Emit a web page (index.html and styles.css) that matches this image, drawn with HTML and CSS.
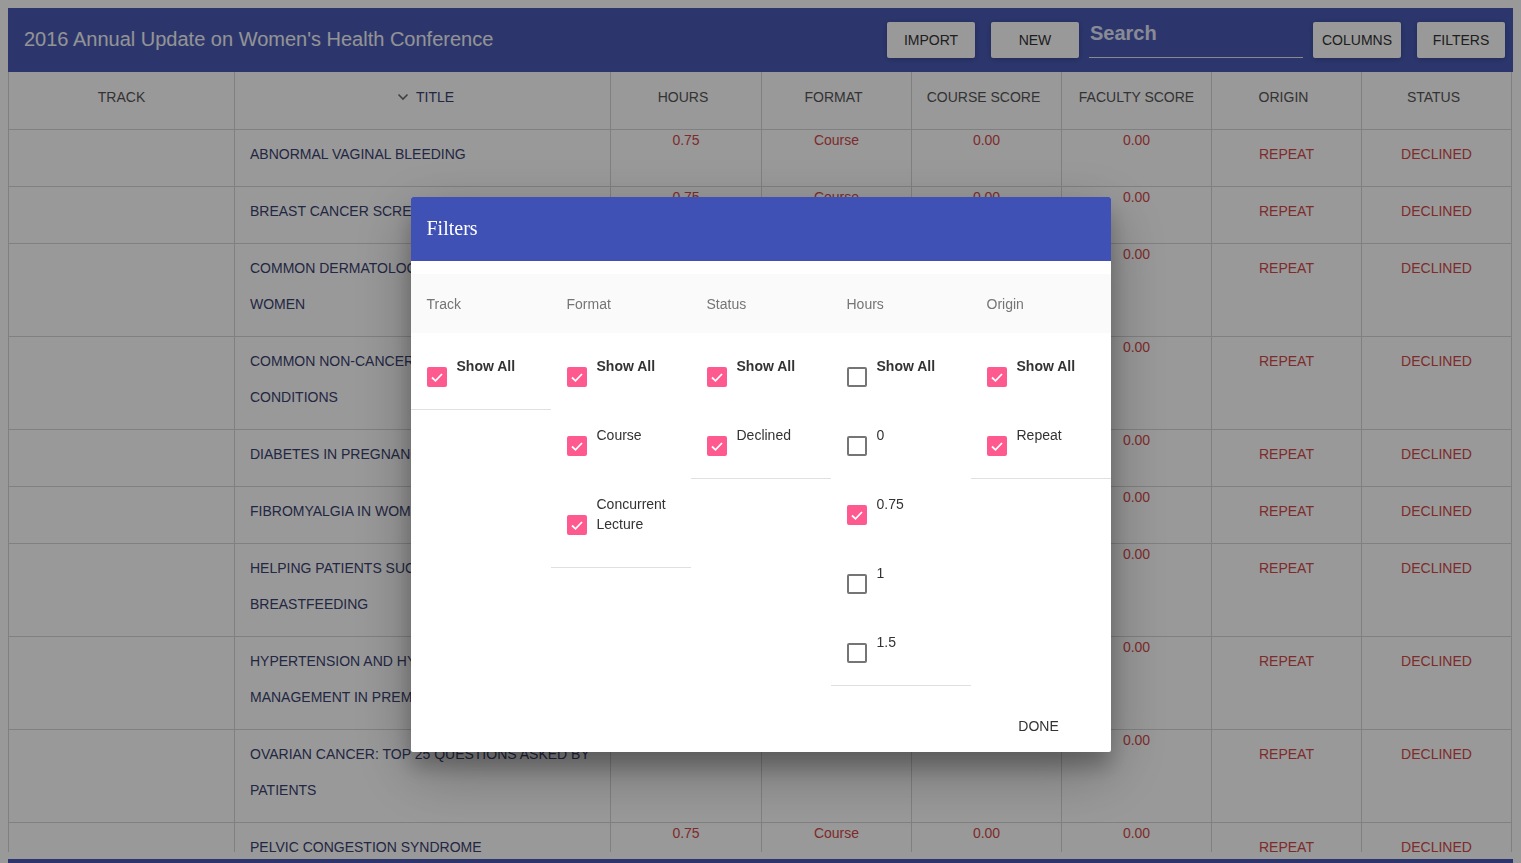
FILE: index.html
```html
<!DOCTYPE html>
<html lang="en">
<head>
<meta charset="utf-8">
<title>2016 Annual Update on Women's Health Conference</title>
<link rel="stylesheet" href="styles.css">
</head>
<body>
<div class="app">
  <header class="appbar">
    <h1 class="appbar-title">2016 Annual Update on Women's Health Conference</h1>
    <div class="appbar-actions">
      <button class="btn btn-import">Import</button>
      <button class="btn btn-new">New</button>
      <div class="search"><span class="search-hint">Search</span></div>
      <button class="btn btn-columns">Columns</button>
      <button class="btn">Filters</button>
    </div>
  </header>

  <div class="table-wrap">
    <table class="grid">
      <colgroup>
        <col class="c-track"><col class="c-title"><col class="c-hours"><col class="c-std"><col class="c-std"><col class="c-std"><col class="c-std"><col class="c-std">
      </colgroup>
      <thead>
        <tr>
          <th class="th-even">TRACK</th>
          <th class="th-sorted"><svg class="chev" viewBox="0 0 12 8" width="12" height="8"><path d="M1.5 1.5 L6 6 L10.5 1.5" fill="none" stroke="#6b6b6b" stroke-width="1.6"/></svg>TITLE</th>
          <th>HOURS</th>
          <th>FORMAT</th>
          <th>COURSE SCORE</th>
          <th class="th-even">FACULTY SCORE</th>
          <th>ORIGIN</th>
          <th>STATUS</th>
        </tr>
      </thead>
      <tbody>
        <tr><td></td><td class="t">ABNORMAL VAGINAL BLEEDING</td><td class="n">0.75</td><td class="n">Course</td><td class="n">0.00</td><td class="n">0.00</td><td class="s">REPEAT</td><td class="s">DECLINED</td></tr>
        <tr><td></td><td class="t">BREAST CANCER SCREENING</td><td class="n">0.75</td><td class="n">Course</td><td class="n">0.00</td><td class="n">0.00</td><td class="s">REPEAT</td><td class="s">DECLINED</td></tr>
        <tr><td></td><td class="t">COMMON DERMATOLOGICAL CONDITIONS IN WOMEN</td><td class="n">0.75</td><td class="n">Course</td><td class="n">0.00</td><td class="n">0.00</td><td class="s">REPEAT</td><td class="s">DECLINED</td></tr>
        <tr><td></td><td class="t">COMMON NON-CANCEROUS GYNECOLOGIC CONDITIONS</td><td class="n">0.75</td><td class="n">Course</td><td class="n">0.00</td><td class="n">0.00</td><td class="s">REPEAT</td><td class="s">DECLINED</td></tr>
        <tr><td></td><td class="t">DIABETES IN PREGNANCY</td><td class="n">0.75</td><td class="n">Course</td><td class="n">0.00</td><td class="n">0.00</td><td class="s">REPEAT</td><td class="s">DECLINED</td></tr>
        <tr><td></td><td class="t">FIBROMYALGIA IN WOMEN</td><td class="n">0.75</td><td class="n">Course</td><td class="n">0.00</td><td class="n">0.00</td><td class="s">REPEAT</td><td class="s">DECLINED</td></tr>
        <tr><td></td><td class="t">HELPING PATIENTS SUCCEED WITH BREASTFEEDING</td><td class="n">0.75</td><td class="n">Course</td><td class="n">0.00</td><td class="n">0.00</td><td class="s">REPEAT</td><td class="s">DECLINED</td></tr>
        <tr><td></td><td class="t">HYPERTENSION AND HYPERLIPIDEMIA MANAGEMENT IN PREMENOPAUSAL WOMEN</td><td class="n">0.75</td><td class="n">Course</td><td class="n">0.00</td><td class="n">0.00</td><td class="s">REPEAT</td><td class="s">DECLINED</td></tr>
        <tr><td></td><td class="t">OVARIAN CANCER: TOP 25 QUESTIONS ASKED BY PATIENTS</td><td class="n">0.75</td><td class="n">Course</td><td class="n">0.00</td><td class="n">0.00</td><td class="s">REPEAT</td><td class="s">DECLINED</td></tr>
        <tr><td></td><td class="t">PELVIC CONGESTION SYNDROME</td><td class="n">0.75</td><td class="n">Course</td><td class="n">0.00</td><td class="n">0.00</td><td class="s">REPEAT</td><td class="s">DECLINED</td></tr>
      </tbody>
    </table>
  </div>
  <div class="footer-bar"></div>
</div>

<div class="overlay"></div>

<div class="dialog" role="dialog">
  <div class="dialog-title">Filters</div>
  <div class="dialog-body">
    <div class="filter-head">
      <div class="fh">Track</div>
      <div class="fh">Format</div>
      <div class="fh">Status</div>
      <div class="fh">Hours</div>
      <div class="fh">Origin</div>
    </div>
    <div class="filter-cols">
      <div class="fcol">
        <div class="opt"><span class="box on"><svg viewBox="0 0 20 20"><path d="M5 10.5 L8.5 13.8 L15 7"/></svg></span><span class="opt-label bold">Show All</span></div>
      </div>
      <div class="fcol">
        <div class="opt"><span class="box on"><svg viewBox="0 0 20 20"><path d="M5 10.5 L8.5 13.8 L15 7"/></svg></span><span class="opt-label bold">Show All</span></div>
        <div class="opt"><span class="box on"><svg viewBox="0 0 20 20"><path d="M5 10.5 L8.5 13.8 L15 7"/></svg></span><span class="opt-label">Course</span></div>
        <div class="opt"><span class="box on"><svg viewBox="0 0 20 20"><path d="M5 10.5 L8.5 13.8 L15 7"/></svg></span><span class="opt-label">Concurrent Lecture</span></div>
      </div>
      <div class="fcol">
        <div class="opt"><span class="box on"><svg viewBox="0 0 20 20"><path d="M5 10.5 L8.5 13.8 L15 7"/></svg></span><span class="opt-label bold">Show All</span></div>
        <div class="opt"><span class="box on"><svg viewBox="0 0 20 20"><path d="M5 10.5 L8.5 13.8 L15 7"/></svg></span><span class="opt-label">Declined</span></div>
      </div>
      <div class="fcol">
        <div class="opt"><span class="box"></span><span class="opt-label bold">Show All</span></div>
        <div class="opt"><span class="box"></span><span class="opt-label">0</span></div>
        <div class="opt"><span class="box on"><svg viewBox="0 0 20 20"><path d="M5 10.5 L8.5 13.8 L15 7"/></svg></span><span class="opt-label">0.75</span></div>
        <div class="opt"><span class="box"></span><span class="opt-label">1</span></div>
        <div class="opt"><span class="box"></span><span class="opt-label">1.5</span></div>
      </div>
      <div class="fcol">
        <div class="opt"><span class="box on"><svg viewBox="0 0 20 20"><path d="M5 10.5 L8.5 13.8 L15 7"/></svg></span><span class="opt-label bold">Show All</span></div>
        <div class="opt"><span class="box on"><svg viewBox="0 0 20 20"><path d="M5 10.5 L8.5 13.8 L15 7"/></svg></span><span class="opt-label">Repeat</span></div>
      </div>
    </div>
  </div>
  <div class="dialog-actions">
    <button class="flat-btn">DONE</button>
  </div>
</div>
</body>
</html>
```

FILE: styles.css
```css
* { box-sizing: border-box; }

html, body {
  margin: 0;
  padding: 0;
  height: 100%;
  overflow: hidden;
}

body {
  padding: 8px;
  background: #ffffff;
  font-family: "Liberation Sans", Arial, Helvetica, sans-serif;
  font-size: 14px;
  color: #333;
}

.app {
  display: flex;
  flex-direction: column;
}

/* ---------- App bar ---------- */
.appbar {
  height: 64px;
  background: #4a5bb5;
  display: flex;
  align-items: center;
  justify-content: space-between;
  padding: 0 8px 0 16px;
}

.appbar-title {
  margin: 0 0 2px;
  font-size: 20px;
  font-weight: normal;
  color: #f6f6fa;
  white-space: nowrap;
}

.appbar-actions {
  display: flex;
  align-items: center;
}

.btn {
  width: 88px;
  height: 36px;
  border: none;
  border-radius: 2px;
  background: #ffffff;
  box-shadow: 0 1px 6px rgba(0,0,0,0.12), 0 1px 4px rgba(0,0,0,0.12);
  font-family: "Liberation Sans", Arial, sans-serif;
  font-size: 14px;
  text-transform: uppercase;
  color: #333;
  padding: 0;
}

.btn-import { margin-right: 16px; }
.btn-new { margin-right: 10px; }
.btn-columns { margin-right: 16px; }

.search {
  width: 214px;
  height: 36px;
  margin-right: 10px;
  border-bottom: 1px solid #e6e6e6;
  padding-left: 1px;
  line-height: 22px;
}

.search-hint {
  font-size: 20px;
  font-weight: bold;
  color: #e3e6f8;
}

/* ---------- Table ---------- */
.table-wrap {
  height: 780px;
  overflow: hidden;
}

.grid {
  table-layout: fixed;
  width: 1504px;
  border-collapse: collapse;
  border-left: 1px solid #d6d6d6;
}

.c-track { width: 226px; }
.c-title { width: 376px; }
.c-hours { width: 151px; }
.c-std { width: 150px; }

.grid th,
.grid td {
  border-right: 1px solid #d6d6d6;
  border-bottom: 1px solid #d6d6d6;
  font-size: 14px;
}

.grid th {
  font-weight: normal;
  color: #555;
  text-align: center;
  line-height: 36px;
  padding: 7px 10px 14px 4px;
  white-space: nowrap;
}

.grid th.th-even {
  padding-left: 4px;
  padding-right: 4px;
}

.grid th.th-sorted {
  color: #3a4270;
  padding-left: 10px;
  padding-right: 4px;
}

.chev {
  margin-right: 7px;
  vertical-align: 1px;
}

.grid td {
  vertical-align: top;
}

.grid td.t {
  color: #3a4270;
  line-height: 36px;
  padding: 6px 12px 14px 15px;
}

.grid td.n {
  color: #d24848;
  text-align: center;
  line-height: 20px;
  padding: 0 4px;
}

.grid td.s {
  color: #d24848;
  text-align: center;
  line-height: 36px;
  padding: 6px 4px 14px;
}

.footer-bar {
  margin-top: 7px;
  height: 40px;
  background: #4a5bb5;
}

/* ---------- Overlay & dialog ---------- */
.overlay {
  position: fixed;
  inset: 0;
  background: rgba(0,0,0,0.4);
}

.dialog {
  position: fixed;
  top: 197px;
  left: 50%;
  transform: translateX(-50%);
  width: 700px;
  background: #ffffff;
  border-radius: 2px;
  box-shadow: 0 19px 60px rgba(0,0,0,0.3), 0 15px 20px rgba(0,0,0,0.22);
  overflow: hidden;
}

.dialog-title {
  height: 64px;
  background: #3f51b5;
  color: #ffffff;
  font-family: "Liberation Serif", "Times New Roman", serif;
  font-size: 20px;
  line-height: 62px;
  padding-left: 16px;
}

.dialog-body {
  padding-top: 13px;
  padding-bottom: 14px;
}

.filter-head {
  display: grid;
  grid-template-columns: repeat(5, 140px);
  height: 59px;
  background: #fafafa;
  align-items: center;
}

.fh {
  padding-left: 16px;
  color: #757575;
  font-size: 14px;
}

.filter-cols {
  display: grid;
  grid-template-columns: repeat(5, 140px);
  align-items: start;
}

.fcol {
  padding-top: 6px;
  padding-bottom: 1px;
  border-bottom: 1px solid #e0e0e0;
}

.opt {
  display: flex;
  align-items: center;
  padding: 17px 8px 10px 16px;
}

.box {
  flex: none;
  width: 20px;
  height: 20px;
  margin-right: 10px;
  border: 2px solid #757575;
  border-radius: 2px;
}

.box.on {
  border: none;
  background: #ff5a8f;
}

.box svg {
  display: block;
  width: 20px;
  height: 20px;
  fill: none;
  stroke: #ffffff;
  stroke-width: 1.8;
}

.opt-label {
  font-size: 14px;
  line-height: 20px;
  padding-bottom: 22px;
  color: #333;
}

.opt-label.bold {
  font-weight: bold;
}

.dialog-actions {
  display: flex;
  justify-content: flex-end;
  padding: 8px 28px 8px 8px;
}

.flat-btn {
  width: 88px;
  height: 36px;
  border: none;
  background: transparent;
  font-family: "Liberation Sans", Arial, sans-serif;
  font-size: 14px;
  color: #333;
  padding: 0;
}
```
